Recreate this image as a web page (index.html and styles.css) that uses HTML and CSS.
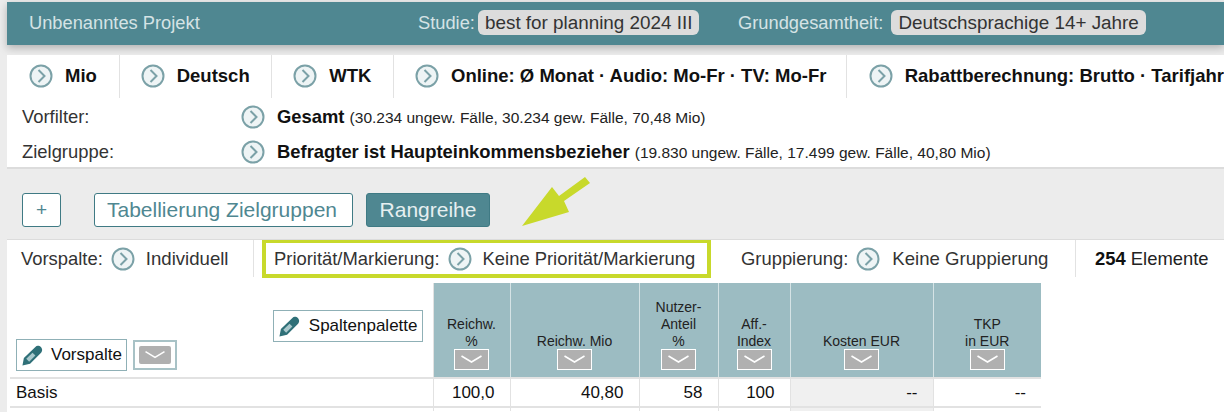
FILE: index.html
```html
<!DOCTYPE html>
<html>
<head>
    <link rel="stylesheet" href="styles.css">
</head>
<body>
    <svg width="0" height="0" class="defs">
        <symbol id="go" viewBox="0 0 24 24">
            <circle cx="12" cy="12" r="10.500" fill="#eef4f5" stroke="#7ba1a7" stroke-width="2"/>
            <path d="M9.500 6 15.500 12l-6 6" fill="none" stroke="#7ba1a7" stroke-width="2"/>
        </symbol>
        <symbol id="pen" viewBox="0 0 24 24">
            <path d="M1.500 22.500 3 14.500 15 3c1.500-1.500 4-1.500 6 .5 1.500 2 1.500 4 0 5.500L9.500 20.500z" fill="#2f7078"/>
            <path d="M5.500 15.500 12 9l3 3-6.500 6.500z" fill="#a9c8cc"/>
        </symbol>
        <symbol id="down" viewBox="0 0 33 19">
            <path d="M6.500 6 16.500 12l10-6" fill="none" stroke="#fff" stroke-width="1.600"/>
        </symbol>
    </svg>

    <header class="topbar">
        <span class="project">Unbenanntes Projekt</span>
        <span class="meta meta-study">Studie: <span class="pill">best for planning 2024 III</span></span>
        <span class="meta meta-base">Grundgesamtheit: <span class="pill">Deutschsprachige 14+ Jahre</span></span>
    </header>

    <section class="settings">
        <div class="tabs">
            <div class="tab tab-mio"><svg class="go"><use href="#go"/></svg>Mio</div>
            <div class="tab tab-lang"><svg class="go"><use href="#go"/></svg>Deutsch</div>
            <div class="tab tab-wtk"><svg class="go"><use href="#go"/></svg>WTK</div>
            <div class="tab tab-online"><svg class="go"><use href="#go"/></svg>Online: Ø Monat · Audio: Mo-Fr · TV: Mo-Fr</div>
            <div class="tab tab-rabatt"><svg class="go"><use href="#go"/></svg>Rabattberechnung: Brutto · Tarifjahr</div>
        </div>
        <div class="filter">
            <span class="filter-label">Vorfilter:</span>
            <svg class="go"><use href="#go"/></svg>
            <span><b>Gesamt</b> <small>(30.234 ungew. Fälle, 30.234 gew. Fälle, 70,48 Mio)</small></span>
        </div>
        <div class="filter">
            <span class="filter-label">Zielgruppe:</span>
            <svg class="go"><use href="#go"/></svg>
            <span><b>Befragter ist Haupteinkommensbezieher</b> <small>(19.830 ungew. Fälle, 17.499 gew. Fälle, 40,80 Mio)</small></span>
        </div>
    </section>

    <nav class="actions">
        <button class="btn btn-plus">+</button>
        <button class="btn btn-table">Tabellierung Zielgruppen</button>
        <button class="btn btn-active">Rangreihe</button>
    </nav>

    <svg class="arrow" viewBox="0 0 76 55">
        <path d="M4 51 34 12 41 21 67 2 72 8 46 26 51 37z" fill="#c8d92b"/>
    </svg>

    <section class="panel">
        <div class="toolbar">
            <div class="tool tool-spalte"><span>Vorspalte:</span><svg class="go"><use href="#go"/></svg><span class="val">Individuell</span></div>
            <div class="tool tool-mark"><span>Priorität/Markierung:</span><svg class="go"><use href="#go"/></svg><span class="val">Keine Priorität/Markierung</span></div>
            <div class="tool tool-group"><span>Gruppierung:</span><svg class="go"><use href="#go"/></svg><span class="val">Keine Gruppierung</span></div>
            <div class="tool tool-count"><span><b>254</b> Elemente</span></div>
        </div>

        <table class="grid">
            <colgroup>
                <col class="c-name"><col class="c-1"><col class="c-2"><col class="c-3"><col class="c-4"><col class="c-5"><col class="c-6">
            </colgroup>
            <thead>
                <tr>
                    <th class="corner">
                        <div class="corner-in">
                            <button class="tool-btn palette"><svg class="pen"><use href="#pen"/></svg>Spaltenpalette</button>
                            <div class="corner-row">
                                <button class="tool-btn"><svg class="pen"><use href="#pen"/></svg>Vorspalte</button>
                                <span class="sort-box"><span class="sort"><svg><use href="#down"/></svg></span></span>
                            </div>
                        </div>
                    </th>
                    <th class="col">Reichw.<br>%<span class="sort"><svg><use href="#down"/></svg></span></th>
                    <th class="col">Reichw. Mio<span class="sort"><svg><use href="#down"/></svg></span></th>
                    <th class="col">Nutzer-<br>Anteil<br>%<span class="sort"><svg><use href="#down"/></svg></span></th>
                    <th class="col">Aff.-<br>Index<span class="sort"><svg><use href="#down"/></svg></span></th>
                    <th class="col">Kosten EUR<span class="sort"><svg><use href="#down"/></svg></span></th>
                    <th class="col">TKP<br>in EUR<span class="sort"><svg><use href="#down"/></svg></span></th>
                </tr>
            </thead>
            <tbody>
                <tr>
                    <td class="name">Basis</td>
                    <td class="num">100,0</td>
                    <td class="num">40,80</td>
                    <td class="num">58</td>
                    <td class="num">100</td>
                    <td class="num shade">--</td>
                    <td class="num">--</td>
                </tr>
                <tr class="stub">
                    <td></td><td></td><td></td><td></td><td></td><td class="shade"></td><td></td>
                </tr>
            </tbody>
        </table>
    </section>
</body>
</html>
```

FILE: styles.css
```css
html, body {
    overflow: hidden;
}

body {
    margin: 0;
    padding: 2px 0 0 7px;
    background: #ececec;
    font-family: "Liberation Sans", Arial, sans-serif;
    color: #111;
    position: relative;
}

.defs {
    position: absolute;
}

.go {
    width: 24px;
    height: 24px;
    flex: none;
}

/* top bar */
.topbar {
    height: 43px;
    background: #4f8791;
    color: #d5e3e5;
    font-size: 18.300px;
    display: flex;
    align-items: center;
    padding: 0 0 2px 22px;
    box-sizing: border-box;
    box-shadow: 0 3px 8px rgba(0,0,0,0.25);
}

.project {
    width: 389px;
}

.meta {
    width: 320px;
    white-space: nowrap;
}

.pill {
    background: #dcdcdc;
    color: #333;
    font-size: 18.850px;
    border-radius: 6px;
    padding: 2px 7px;
}

.meta-study .pill { margin-left: -2px; }
.meta-base .pill { margin-left: 3px; }

/* settings card */
.settings {
    margin-top: 10px;
    height: 114px;
    background: #fff;
    border-bottom: 2px solid #dcdcdc;
    box-sizing: border-box;
    white-space: nowrap;
    overflow: hidden;
}

.tabs {
    display: flex;
    height: 43px;
    margin-bottom: 1px;
}

.tab {
    display: flex;
    align-items: center;
    gap: 12px;
    font-size: 18.500px;
    font-weight: bold;
    border-right: 1px solid #e2e2e2;
    box-sizing: border-box;
    padding-left: 22px;
    padding-bottom: 1px;
}

.tab-mio { width: 113px; }
.tab-lang { width: 153px; padding-left: 21px; }
.tab-wtk { width: 122px; padding-left: 21px; }
.tab-online { width: 454px; padding-left: 21px; }
.tab-rabatt { border-right: 0; padding-left: 22px; }

.filter {
    display: flex;
    align-items: center;
    height: 35px;
    padding-left: 15px;
    font-size: 18.400px;
}

.filter-label {
    width: 219px;
    color: #333;
}

.filter .go {
    margin-right: 12px;
}

.filter small {
    font-size: 15.500px;
    color: #222;
}

/* buttons */
.actions {
    display: flex;
    padding: 24px 0 0 15px;
    height: 34px;
}

.btn {
    font: inherit;
    font-size: 21px;
    height: 34px;
    padding: 0;
    border: 1px solid #3f7a84;
    border-radius: 3px;
    background: #fff;
    color: #4f8791;
}

.btn-plus {
    width: 39px;
    font-size: 19px;
    margin-right: 33px;
}

.btn-table {
    width: 259px;
    margin-right: 13px;
    padding-right: 3px;
}

.btn-active {
    width: 124px;
    background: #4f8791;
    color: #e6eff0;
}

.arrow {
    position: absolute;
    left: 518px;
    top: 175px;
    width: 76px;
    height: 55px;
}

/* lower panel */
.panel {
    margin-top: 12px;
    height: 173px;
    background: #fff;
    border-top: 1px solid #dcdcdc;
    box-sizing: border-box;
    overflow: hidden;
}

.toolbar {
    display: flex;
    height: 37px;
    font-size: 18.400px;
    color: #333;
    white-space: nowrap;
}

.tool {
    display: flex;
    align-items: center;
    gap: 8px;
    box-sizing: border-box;
    border-right: 1px solid #e2e2e2;
}

.tool .val {
    font-size: 18.600px;
    margin-left: 3px;
}

.tool-spalte { width: 247px; padding-left: 14px; }
.tool-mark {
    width: 449px;
    height: 39px;
    margin: -1px 0 0 8px;
    padding-left: 8px;
    border: 4px solid #c8d92b;
}
.tool-mark .val { font-size: 18.400px; }
.tool-group { width: 365px; padding-left: 30px; }
.tool-group .val { margin-left: 4px; }
.tool-count { border-right: 0; padding-left: 19px; color: #222; }
.tool-count b { color: #111; }

.grid {
    margin: 6px 0 0 3px;
    border-collapse: collapse;
    table-layout: fixed;
    width: 1031px;
}

.c-name { width: 423px; }
.c-1 { width: 77px; }
.c-2 { width: 129px; }
.c-3 { width: 79px; }
.c-4 { width: 72px; }
.c-5 { width: 143px; }
.c-6 { width: 108px; }

.col {
    height: 87px;
    background: #9cbcc2;
    border-right: 1px solid #d5e3e5;
    border-bottom: 2px solid #e2e2e2;
    vertical-align: bottom;
    padding: 0 0 7px;
    font-size: 14px;
    font-weight: normal;
    line-height: 17px;
    color: #222;
}

.col:last-child {
    border-right: 0;
}

.sort {
    display: block;
    width: 33px;
    height: 19px;
    margin: -1px auto 0;
    background: #b0b0b0;
    border: 1px solid #fff;
}

.sort svg {
    display: block;
    width: 33px;
    height: 19px;
}

.corner {
    border-bottom: 2px solid #e2e2e2;
    border-right: 1px solid #e2e2e2;
    padding: 0;
    vertical-align: bottom;
    font-weight: normal;
}

.corner-in {
    display: flex;
    flex-direction: column;
    align-items: flex-start;
    padding: 0 0 6px 6px;
}

.tool-btn {
    font: inherit;
    font-size: 17px;
    color: #111;
    height: 32px;
    background: #fff;
    border: 1px solid #8fb0b6;
    display: flex;
    align-items: center;
    gap: 8px;
    padding: 0 4px;
}

.palette {
    align-self: flex-end;
    margin: 0 10px -3px 0;
}

.pen {
    width: 23px;
    height: 23px;
}

.corner-row {
    display: flex;
    gap: 6px;
    align-items: center;
}

.corner-row .tool-btn {
    gap: 7px;
}

.sort-box {
    border: 2px solid #a8c2c6;
    padding: 4px;
}

.sort-box .sort {
    width: 32px;
    height: 18px;
    margin: 0;
    border: 0;
    border-radius: 2px;
}

.sort-box .sort svg {
    width: 32px;
    height: 18px;
}

td {
    height: 29px;
    padding: 1px 0 0;
    box-sizing: border-box;
    border-right: 1px solid #e2e2e2;
    border-bottom: 2px solid #e2e2e2;
    font-size: 17px;
}

td:last-child {
    border-right: 0;
}

.name {
    padding-left: 6px;
}

.num {
    text-align: right;
    padding-right: 15px;
}

.shade {
    background: #f0f0f0;
}

.stub td {
    height: 4px;
    border-bottom: 0;
}
```
